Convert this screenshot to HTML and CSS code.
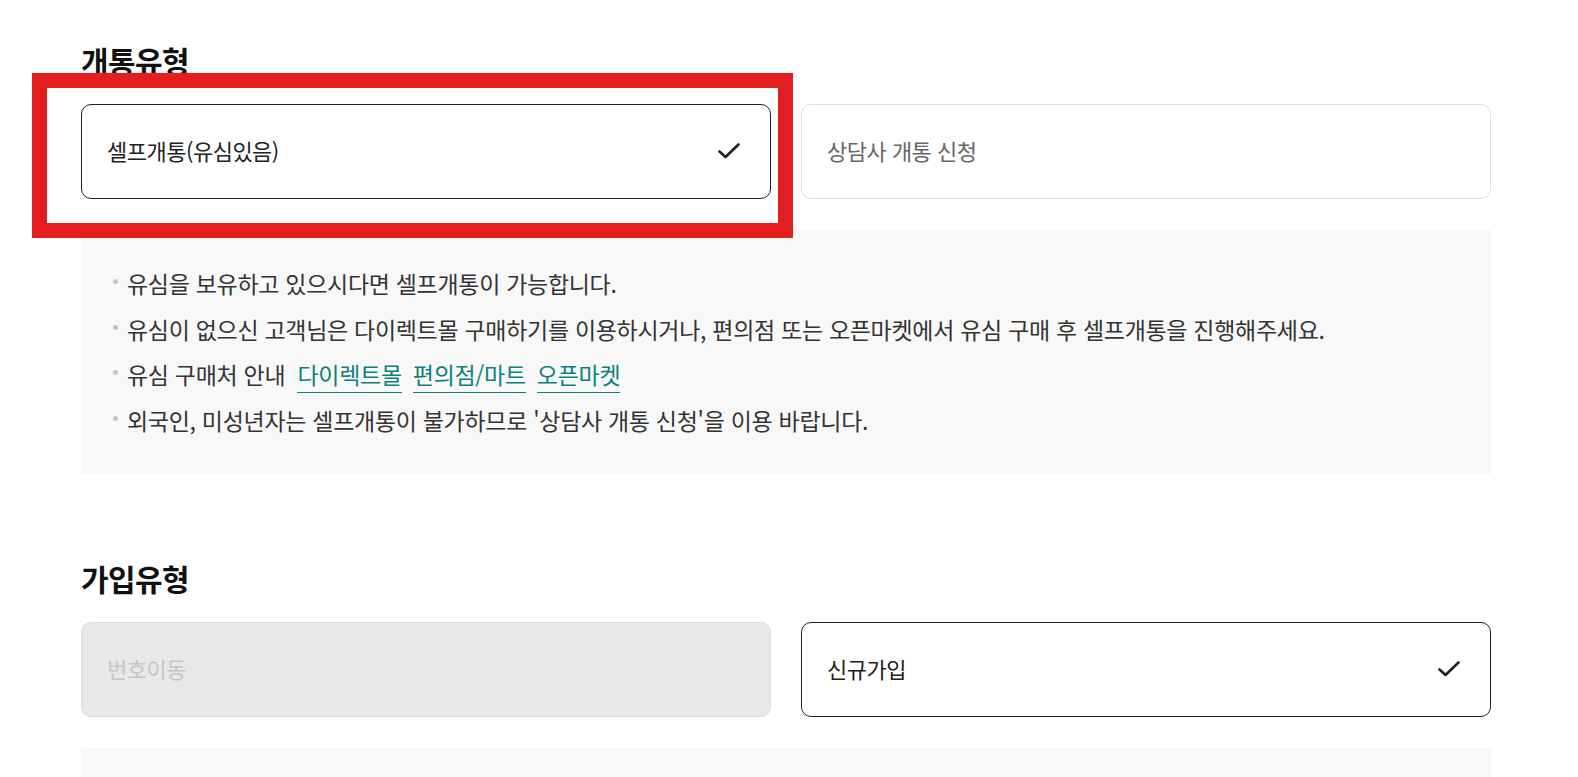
FILE: index.html
```html
<!DOCTYPE html>
<html lang="ko">
<head>
<meta charset="utf-8">
<title>개통유형</title>
<link rel="stylesheet" href="styles.css">
</head>
<body>
<div class="wrap">
  <section class="section">
    <h2 class="title">개통유형</h2>
    <div class="options">
      <div class="option is-selected">
        <span class="option-label">셀프개통(유심있음)</span>
        <svg class="check" width="22" height="16" viewBox="0 0 22 16"><polyline points="1.5,8.5 7.5,14 20.5,1.5" fill="none" stroke="#222" stroke-width="2.6" stroke-linecap="round" stroke-linejoin="round"/></svg>
      </div>
      <div class="option">
        <span class="option-label muted">상담사 개통 신청</span>
      </div>
    </div>
    <div class="info">
      <ul class="info-list">
        <li>유심을 보유하고 있으시다면 셀프개통이 가능합니다.</li>
        <li>유심이 없으신 고객님은 다이렉트몰 구매하기를 이용하시거나, 편의점 또는 오픈마켓에서 유심 구매 후 셀프개통을 진행해주세요.</li>
        <li>유심 구매처 안내 <a class="link" href="#">다이렉트몰</a><a class="link" href="#">편의점/마트</a><a class="link" href="#">오픈마켓</a></li>
        <li>외국인, 미성년자는 셀프개통이 불가하므로 '상담사 개통 신청'을 이용 바랍니다.</li>
      </ul>
    </div>
  </section>

  <section class="section section-2">
    <h2 class="title">가입유형</h2>
    <div class="options">
      <div class="option is-disabled">
        <span class="option-label">번호이동</span>
      </div>
      <div class="option is-selected">
        <span class="option-label">신규가입</span>
        <svg class="check" width="22" height="16" viewBox="0 0 22 16"><polyline points="1.5,8.5 7.5,14 20.5,1.5" fill="none" stroke="#222" stroke-width="2.6" stroke-linecap="round" stroke-linejoin="round"/></svg>
      </div>
    </div>
    <div class="info info-empty"></div>
  </section>
</div>
<div class="highlight"></div>
</body>
</html>
```

FILE: styles.css
```css
* { box-sizing: border-box; }
html, body { margin: 0; padding: 0; background: #fff; }
body {
  position: relative;
  font-family: "Noto Sans CJK KR", "Noto Sans", sans-serif;
  color: #222;
  overflow: hidden;
  height: 777px;
}
.wrap {
  padding: 40px 87px 0 81px;
}
.title {
  margin: 0 0 24px;
  font-size: 30px;
  line-height: 40px;
  font-weight: 700;
  letter-spacing: -0.6px;
  color: #111;
}
.section-2 { margin-top: 84px; }
.options {
  display: grid;
  grid-template-columns: 1fr 1fr;
  gap: 30px;
}
.option {
  height: 95px;
  border: 1px solid #dedede;
  border-radius: 10px;
  background: #fff;
  display: flex;
  align-items: center;
  justify-content: space-between;
  padding: 0 30px 4px 25px;
}
.option.is-selected { border-color: #222; }
.option.is-disabled { background: #e8e8e8; border-color: #dcdcdc; }
.option-label {
  font-size: 22px;
  line-height: 30px;
  letter-spacing: -0.5px;
  color: #222;
}
.option-label.muted { color: #666; }
.is-disabled .option-label { color: #c6c6c6; }
.check { display: block; margin-top: 2px; }
.info {
  margin-top: 31px;
  background: #f8f8f8;
  padding: 31px 30px 31px 32px;
}
.info-empty { height: 40px; padding: 0; }
.info-list {
  list-style: none;
  margin: 0;
  padding: 0;
}
.info-list li {
  position: relative;
  padding-left: 14px;
  font-size: 23px;
  line-height: 45.5px;
  color: #333;
  letter-spacing: -0.3px;
}
.info-list li::before {
  content: "";
  position: absolute;
  left: 0;
  top: 18px;
  width: 5px;
  height: 5px;
  border-radius: 50%;
  background: #c4c4c4;
}
.link {
  color: #0a827b;
  text-decoration: none;
  border-bottom: 1px solid #0a827b;
  margin-left: 6px;
  padding-bottom: 1px;
}
.link + .link { margin-left: 11px; }
.highlight {
  position: absolute;
  left: 32px;
  top: 73px;
  width: 761px;
  height: 165px;
  border: 15px solid #e41e1e;
}
```
